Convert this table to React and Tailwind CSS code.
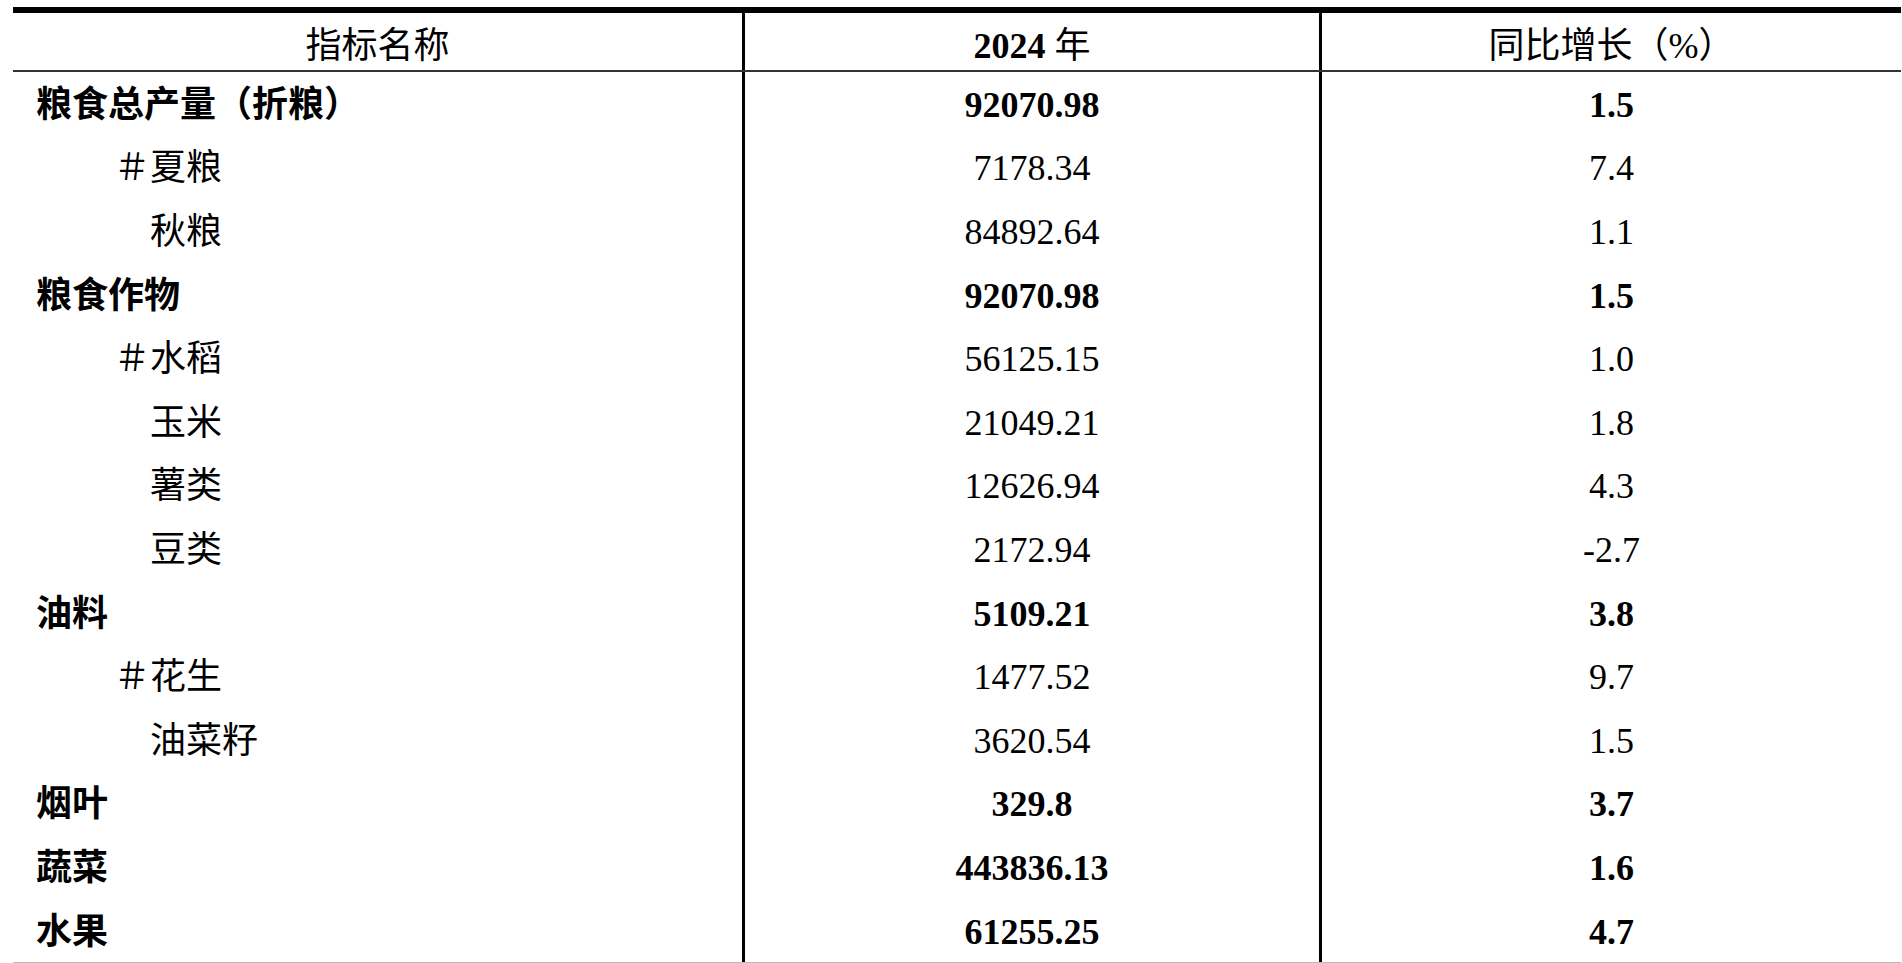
const rows = [
  { name: "粮食总产量（折粮）", value: "92070.98", growth: "1.5", bold: true },
  { name: "＃夏粮", value: "7178.34", growth: "7.4", level: 1 },
  { name: "秋粮", value: "84892.64", growth: "1.1", level: 2 },
  { name: "粮食作物", value: "92070.98", growth: "1.5", bold: true },
  { name: "＃水稻", value: "56125.15", growth: "1.0", level: 1 },
  { name: "玉米", value: "21049.21", growth: "1.8", level: 2 },
  { name: "薯类", value: "12626.94", growth: "4.3", level: 2 },
  { name: "豆类", value: "2172.94", growth: "-2.7", level: 2 },
  { name: "油料", value: "5109.21", growth: "3.8", bold: true },
  { name: "＃花生", value: "1477.52", growth: "9.7", level: 1 },
  { name: "油菜籽", value: "3620.54", growth: "1.5", level: 2 },
  { name: "烟叶", value: "329.8", growth: "3.7", bold: true },
  { name: "蔬菜", value: "443836.13", growth: "1.6", bold: true },
  { name: "水果", value: "61255.25", growth: "4.7", bold: true },
];

const font = { fontFamily: "'Liberation Serif', 'Noto Sans CJK SC', serif" };

export default function App() {
  return (
    <div className="w-[1902px] h-[963px] bg-white pt-[7px] pl-[13px] pr-[1px] overflow-hidden text-black" style={font}>
      <div className="border-t-[6px] border-black">
        {/* HEADER */}
        <div className="grid grid-cols-[729px_577px_1fr] h-[59px] border-b-2 border-[#333]">
          <div className="flex items-center justify-center pt-[8px] text-[36px] leading-none">
            指标名称
          </div>
          <div className="flex items-center justify-center pt-[8px] text-[36px] leading-none border-l-[3px] border-black">
            <span className="font-bold">2024</span>
            <span className="ml-[9px]">年</span>
          </div>
          <div className="flex items-center justify-center pt-[8px] text-[36px] leading-none border-l-[3px] border-black">
            同比增长（%）
          </div>
        </div>

        {/* BODY */}
        <div className="border-b border-[#bbb]">
          {rows.map((r, i) => (
            <div key={i} className="grid grid-cols-[729px_577px_1fr] h-[63.6px]">
              <div
                className={
                  "flex items-center pt-[2px] text-[36px] leading-none " +
                  (r.bold ? "font-bold pl-[23px]" : r.level === 1 ? "pl-[101px]" : "pl-[137px]")
                }
              >
                {r.name}
              </div>
              <div
                className={
                  "flex items-center justify-center pt-[2px] text-[36px] leading-none border-l-[3px] border-black " +
                  (r.bold ? "font-bold" : "")
                }
              >
                {r.value}
              </div>
              <div
                className={
                  "flex items-center justify-center pt-[2px] text-[36px] leading-none border-l-[3px] border-black " +
                  (r.bold ? "font-bold" : "")
                }
              >
                {r.growth}
              </div>
            </div>
          ))}
        </div>
      </div>
    </div>
  );
}
